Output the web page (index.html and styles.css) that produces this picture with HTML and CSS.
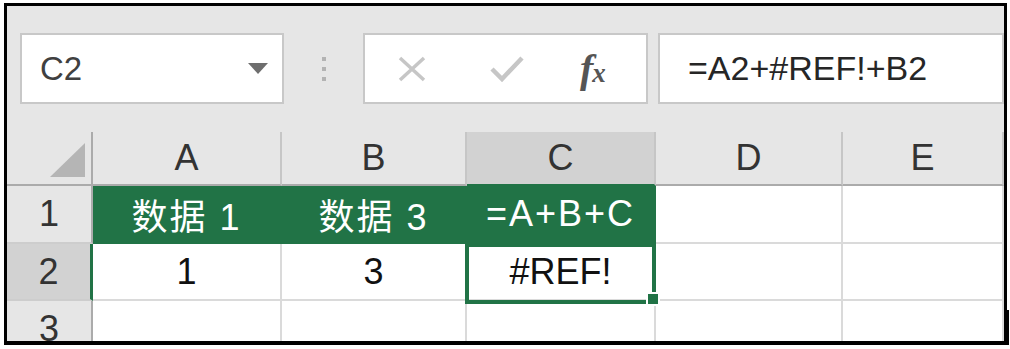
FILE: index.html
```html
<!DOCTYPE html>
<html lang="zh-CN">
    <head>
        <meta charset="utf-8" />
        <title>#REF! 错误</title>
        <link rel="stylesheet" href="styles.css">
    </head>
    <body>
        <div class="page">
            <div class="frame">
                <div class="toolbar">
                    <div class="nameBox">
                        <span class="nameText">C2</span>
                        <svg class="caret" width="20" height="11" viewBox="0 0 20 11"><path d="M0 0h20L10 11z" fill="#6e6e6e"/></svg>
                    </div>
                    <div class="grip"><span></span><span></span><span></span></div>
                    <div class="buttonBox">
                        <svg class="cancelIcon" width="30" height="26" viewBox="0 0 30 26"><path d="M3 2l24 22M27 2L3 24" stroke="#c6c6c6" stroke-width="3.5" fill="none"/></svg>
                        <svg class="enterIcon" width="34" height="27" viewBox="0 0 34 27"><path d="M2 14l10 10L32 3" stroke="#c6c6c6" stroke-width="4.5" fill="none"/></svg>
                        <span class="fx"><i>f</i><i class="fxSub">x</i></span>
                    </div>
                    <div class="formulaBox">=A2+#REF!+B2</div>
                </div>
                <div class="sheet">
                    <div class="corner">
                        <svg width="35" height="34" viewBox="0 0 35 34"><path d="M35 0V34H0z" fill="#b5b5b5"/></svg>
                    </div>
                    <div class="colHead">A</div>
                    <div class="colHead">B</div>
                    <div class="colHead active">C</div>
                    <div class="colHead">D</div>
                    <div class="colHead">E</div>

                    <div class="rowHead">1</div>
                    <div class="cell title">数据 1</div>
                    <div class="cell title">数据 3</div>
                    <div class="cell title">=A+B+C</div>
                    <div class="cell"></div>
                    <div class="cell"></div>

                    <div class="rowHead active">2</div>
                    <div class="cell">1</div>
                    <div class="cell">3</div>
                    <div class="cell selected">#REF!</div>
                    <div class="cell"></div>
                    <div class="cell"></div>

                    <div class="rowHead">3</div>
                    <div class="cell"></div>
                    <div class="cell"></div>
                    <div class="cell"></div>
                    <div class="cell"></div>
                    <div class="cell"></div>
                </div>
            </div>
        </div>
    </body>
</html>
```

FILE: styles.css
```css
html, body {
    margin: 0;
    background-color: #fff;
    font-family: "Liberation Sans", "Noto Sans CJK SC", sans-serif;
}

.page {
    position: relative;
    padding: 3px 0 0 4px;
}

/* stray edge of the screenshot, bottom right */
.page::after {
    content: "";
    position: absolute;
    left: 1007px;
    top: 310px;
    width: 2px;
    height: 40px;
    background-color: #000;
}

.frame {
    width: 997px;
    height: 335px;
    border: 3px solid #000;
    border-bottom-width: 4px;
    overflow: hidden;
    background-color: #e6e6e6;
}

.toolbar {
    display: flex;
    align-items: flex-start;
    height: 126px;
    padding: 27px 0 0 13px;
    box-sizing: border-box;
}

.nameBox {
    display: flex;
    align-items: center;
    justify-content: space-between;
    width: 264px;
    height: 71px;
    box-sizing: border-box;
    padding: 0 14px 0 18px;
    border: 2px solid #c8c8c8;
    background-color: #fff;
}

.nameText {
    font-size: 33px;
    color: #404040;
}

.grip {
    display: flex;
    flex-direction: column;
    align-items: center;
    justify-content: center;
    gap: 6px;
    width: 79px;
    height: 71px;
}

.grip span {
    width: 4px;
    height: 4px;
    background-color: #b3b3b3;
}

.buttonBox {
    display: flex;
    align-items: center;
    width: 285px;
    height: 71px;
    box-sizing: border-box;
    padding-left: 32px;
    border: 2px solid #c8c8c8;
    background-color: #fff;
}

.enterIcon {
    margin-left: 63px;
}

.fx {
    margin-left: 56px;
    font-family: "Liberation Serif", serif;
    font-weight: bold;
    color: #555;
    font-size: 40px;
    line-height: 1;
    letter-spacing: -1px;
}

.fxSub {
    font-size: 27px;
}

.formulaBox {
    display: flex;
    align-items: center;
    flex: 1;
    height: 71px;
    box-sizing: border-box;
    margin-left: 10px;
    padding-left: 28px;
    border: 2px solid #c8c8c8;
    background-color: #fff;
    font-size: 34px;
    color: #262626;
}

.sheet {
    display: grid;
    grid-template-columns: 86px 189px 185px 189px 187px 1fr;
    grid-template-rows: 54px 58px 57px 57px;
    background-color: #fff;
}

.sheet > div {
    display: flex;
    align-items: center;
    justify-content: center;
    box-sizing: border-box;
    font-size: 36px;
}

.corner {
    justify-content: flex-end !important;
    align-items: flex-end !important;
    padding: 0 6px 7px 0;
    background-color: #e6e6e6;
    border-right: 2px solid #ababab;
    border-bottom: 2px solid #ababab;
}

.colHead {
    background-color: #e6e6e6;
    border-right: 2px solid #c6c6c6;
    border-bottom: 2px solid #ababab;
    color: #333;
}

.colHead.active {
    background-color: #d2d2d2;
    border-bottom-color: #217346;
}

.rowHead {
    background-color: #e6e6e6;
    border-right: 2px solid #ababab;
    border-bottom: 2px solid #cdcdcd;
    color: #333;
}

.rowHead.active {
    background-color: #d2d2d2;
    border-right: 3px solid #217346;
}

.cell {
    border-right: 2px solid #dadada;
    border-bottom: 2px solid #dadada;
    color: #111;
}

.cell.title {
    background-color: #217346;
    border-color: #217346;
    color: #fff;
    letter-spacing: 2px;
}

.cell.selected {
    position: relative;
    z-index: 1;
}

.cell.selected::before {
    content: "";
    position: absolute;
    top: -1px;
    left: -2px;
    right: -2px;
    bottom: -5px;
    border: 4px solid #217346;
}

.cell.selected::after {
    content: "";
    position: absolute;
    right: -6px;
    bottom: -7px;
    width: 10px;
    height: 10px;
    border: 2px solid #fff;
    background-color: #217346;
}
```
